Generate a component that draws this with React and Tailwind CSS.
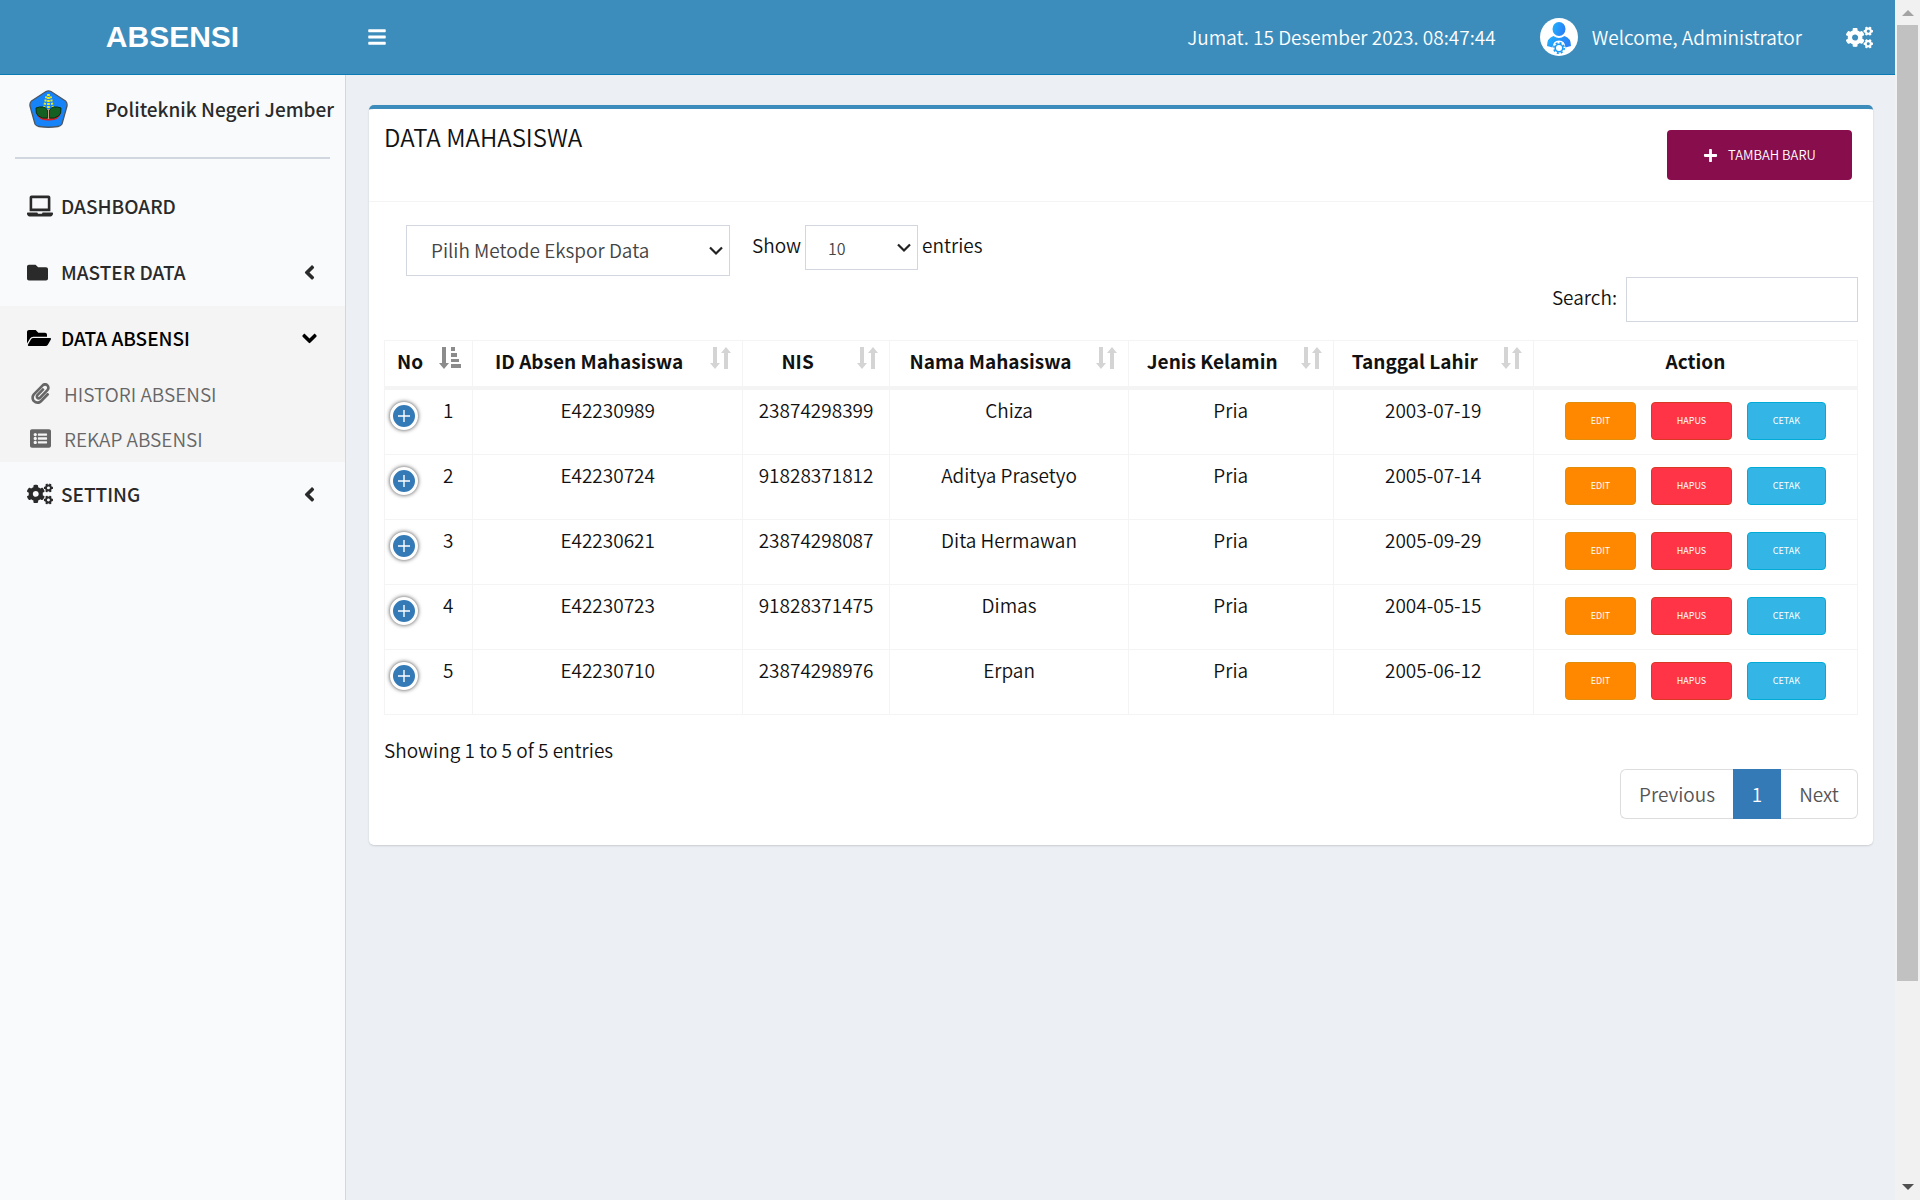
import React from 'react';
import { FaBars, FaCogs, FaFolder, FaFolderOpen, FaPaperclip, FaListAlt, FaPlus, FaLaptop, FaAngleLeft, FaAngleDown } from 'react-icons/fa';

const rows = [
  ['1', 'E42230989', '23874298399', 'Chiza', 'Pria', '2003-07-19'],
  ['2', 'E42230724', '91828371812', 'Aditya Prasetyo', 'Pria', '2005-07-14'],
  ['3', 'E42230621', '23874298087', 'Dita Hermawan', 'Pria', '2005-09-29'],
  ['4', 'E42230723', '91828371475', 'Dimas', 'Pria', '2004-05-15'],
  ['5', 'E42230710', '23874298976', 'Erpan', 'Pria', '2005-06-12'],
];

const columns = ['No', 'ID Absen Mahasiswa', 'NIS', 'Nama Mahasiswa', 'Jenis Kelamin', 'Tanggal Lahir'];

function CampusLogo() {
  return (
    <svg className="h-[38px] w-[39px]" viewBox="0 0 39 38" role="img" aria-label="Logo Politeknik Negeri Jember">
      <path d="M17 1.500 Q19.500 .3 22 1.500 L36.500 11 Q38.500 13 38 16 L33 34 Q32 36 29 36.500 Q19.500 38 10 36.500 Q7 36 6 34 L1 16 Q.5 13 2.500 11Z" fill="#1684f8" stroke="#4d5763" strokeWidth="1.300" />
      <path d="M19.500 4v16" stroke="#f4ee12" strokeWidth="2.600" strokeDasharray="2 1" />
      <path d="M15 18l2.500-12M24 18l-2.500-12" stroke="#e4e820" strokeWidth="2.200" strokeDasharray="2 1.300" />
      <path d="M7 23q4 6 12 4.500q9 1.500 13-4.500q-2 8-12.500 7.500q-10 .5-12.500-7.500z" fill="#d21f2b" />
      <path d="M7 18q8-3 11.500 2v8q-5 1-9-2q-3-2-2.500-8zM32 18q-8-3-11.500 2v8q5 1 9-2q3-2 2.500-8z" fill="#145f22" stroke="#07300e" strokeWidth="1" />
      <path d="M19.500 19v10" stroke="#c9a08a" strokeWidth="1.200" />
    </svg>
  );
}

function Avatar() {
  return (
    <svg className="size-[38px]" viewBox="0 0 38 38" role="img" aria-label="Administrator">
      <defs>
        <linearGradient id="person" x1="0" y1="0" x2="1" y2="0.3">
          <stop offset="0" stopColor="#1fb4fd" />
          <stop offset="1" stopColor="#2a80f7" />
        </linearGradient>
      </defs>
      <circle cx="19" cy="19" r="19" fill="#fff" />
      <ellipse cx="19" cy="11" rx="6.500" ry="7" fill="url(#person)" />
      <path d="M7 28q0-8 6.500-10q5.500 4 11 0q6.500 2 6.500 10l-5.500 1.500q-.5-7-6.500-7t-6.500 7z" fill="url(#person)" />
      <circle cx="19" cy="30" r="3.800" fill="none" stroke="#1b9af7" strokeWidth="1.600" />
      <circle cx="19" cy="30" r="5.200" fill="none" stroke="#1b9af7" strokeWidth="1.600" strokeDasharray="2.040 2.040" />
    </svg>
  );
}

function SortIcon() {
  return (
    <svg className="h-[23px] w-[21px]" viewBox="0 0 21 23" fill="#d4d4d4" aria-hidden="true">
      <path d="M3 0h4v16h3l-5 6-5-6h3z" />
      <path d="M14 22h4V6h3l-5-6-5 6h3z" />
    </svg>
  );
}

function SortAscIcon() {
  return (
    <svg className="h-[23px] w-[22px]" viewBox="0 0 22 23" fill="#8c8c8c" aria-hidden="true">
      <path d="M3 0h4v16h3l-5 6-5-6h3z" />
      <path d="M12 0h4v4h-4zM12 6h6v4h-6zM12 12h8v3h-8zM12 17h10v4h-10z" />
    </svg>
  );
}

function MenuItem({ icon, label, chevron, active }) {
  return (
    <a href="#" className={`flex h-[66px] items-center pr-6 pb-0.5 pl-[27px] leading-7 font-medium ${active ? 'text-black' : 'text-[#2a2a2a]'}`}>
      <span className="w-[34px]">{icon}</span>
      <span className="flex-1">{label}</span>
      {chevron}
    </a>
  );
}

function SelectArrow({ className }) {
  return (
    <svg className={`pointer-events-none absolute h-2.5 w-3.5 ${className}`} viewBox="0 0 14 10" fill="none" stroke="#222" strokeWidth="2.200" aria-hidden="true">
      <path d="M1 1.500l6 6 6-6" />
    </svg>
  );
}

export default function App() {
  return (
    <div className="flex min-h-screen bg-[#ecf0f5] font-['Noto_Sans_CJK_SC','Noto_Sans',sans-serif] text-[19px] leading-[28px] font-[350] text-[#111]">
      <div className="flex min-w-0 flex-1 flex-col">
        <header className="flex h-[75px] items-center border-b border-[#0a7bb5] bg-[#3c8dbc] text-white">
          <a href="#" className="w-[345px] text-center font-['Liberation_Sans',Arial,sans-serif] text-[30px] font-bold">ABSENSI</a>
          <button type="button" className="ml-[22px]" aria-label="Toggle menu"><FaBars size={20} /></button>
          <div className="ml-auto flex items-center pr-[22px]">
            <span>Jumat. 15 Desember 2023. 08:47:44</span>
            <a href="#" className="ml-11 flex items-center gap-[14px]"><Avatar />Welcome, Administrator</a>
            <button type="button" className="ml-11" aria-label="Pengaturan"><FaCogs size={27} /></button>
          </div>
        </header>
        <div className="flex flex-1">
          <aside className="w-[346px] shrink-0 border-r border-[#d2d6de] bg-[#f9fafc]">
            <div className="flex h-[67px] items-center gap-[37px] pl-[29px] font-medium text-[#2a2a2a]">
              <CampusLogo />
              <span>Politeknik Negeri Jember</span>
            </div>
            <hr className="mx-[15px] my-[15px] border-t-2 border-[#d2d6de]" />
            <nav>
              <MenuItem icon={<FaLaptop size={26} />} label="DASHBOARD" />
              <MenuItem icon={<FaFolder size={21} />} label="MASTER DATA" chevron={<FaAngleLeft size={23} />} />
              <div className="bg-[#f4f4f5]">
                <MenuItem active icon={<FaFolderOpen size={24} />} label="DATA ABSENSI" chevron={<FaAngleDown size={23} />} />
                <a href="#" className="flex h-[45px] items-center pb-0.5 pl-[30px] text-[#666]"><span className="w-[34px]"><FaPaperclip size={21} /></span>HISTORI ABSENSI</a>
                <a href="#" className="flex h-[45px] items-center pb-0.5 pl-[30px] text-[#666]"><span className="w-[34px]"><FaListAlt size={21} /></span>REKAP ABSENSI</a>
              </div>
              <MenuItem icon={<FaCogs size={26} />} label="SETTING" chevron={<FaAngleLeft size={23} />} />
            </nav>
          </aside>
          <main className="min-w-0 flex-1 pt-[30px] pr-[22px] pl-[23px]">
            <section className="rounded-[5px] border-t-4 border-[#3c8dbc] bg-white shadow-[0_1px_2px_rgba(0,0,0,0.15)]">
              <div className="flex items-start justify-between border-b border-[#f4f4f4] pt-[15px] pr-[21px] pb-[21px] pl-[15px]">
                <h1 className="text-[24px] leading-[26px]">DATA MAHASISWA</h1>
                <button type="button" className="mt-1.5 flex h-[50px] w-[185px] items-center justify-center gap-2.5 rounded bg-[#870d4c] text-[13px] text-white"><FaPlus size={15} />TAMBAH BARU</button>
              </div>
              <div className="px-[15px] pt-[23px] pb-[26px]">
                <div className="flex items-start pl-[22px]">
                  <div className="relative">
                    <select aria-label="Metode ekspor" className="h-[51px] w-[324px] appearance-none border border-[#d2d6de] bg-white px-6 pb-0.5 text-[#444]"><option>Pilih Metode Ekspor Data</option></select>
                    <SelectArrow className="top-[21px] right-[7px]" />
                  </div>
                  <label className="ml-[22px] flex items-start gap-1">
                    <span className="pt-1.5">Show</span>
                    <span className="relative">
                      <select className="h-[45px] w-[113px] appearance-none border border-[#d2d6de] bg-white px-[22px] text-[16px] text-[#444]"><option>10</option></select>
                      <SelectArrow className="top-[18px] right-[7px]" />
                    </span>
                    <span className="pt-1.5">entries</span>
                  </label>
                </div>
                <label className="mt-px flex items-center justify-end gap-[9px]">
                  <span className="pb-1.5">Search:</span>
                  <input type="search" className="h-[45px] w-[232px] border border-[#d2d6de] bg-white px-4 text-[16px]" />
                </label>
                <table className="mt-[18px] w-full table-fixed border-collapse border border-[#f4f4f4] text-center">
                  <colgroup>
                    <col className="w-[6%]" /><col className="w-[18.3%]" /><col className="w-[10%]" /><col className="w-[16.2%]" /><col className="w-[13.9%]" /><col className="w-[13.6%]" /><col />
                  </colgroup>
                  <thead>
                    <tr className="h-[47px] border-b-4 border-[#f4f4f4]">
                      {columns.map((c, i) => (
                        <th key={c} className="relative border-r border-[#f4f4f4] pr-[37px] pb-1 font-bold whitespace-nowrap">
                          {c}
                          <button type="button" aria-label={`Urutkan ${c}`} className="absolute top-1.5 right-[11px]">{i === 0 ? <SortAscIcon /> : <SortIcon />}</button>
                        </th>
                      ))}
                      <th className="pb-1 font-bold">Action</th>
                    </tr>
                  </thead>
                  <tbody>
                    {rows.map((r) => (
                      <tr key={r[0]} className="h-[65px] border-b border-[#f4f4f4] align-top first:h-[67px]">
                        <td className="border-r border-[#f4f4f4]">
                          <div className="flex items-start pl-[5px]">
                            <button type="button" aria-label={`Detail baris ${r[0]}`} className="mt-3 flex size-7 items-center justify-center rounded-full border-[3px] border-white bg-[#337ab7] text-white shadow-[0_0_4px_#444]">
                              <svg className="size-3" viewBox="0 0 12 12" stroke="currentColor" strokeWidth="1.400" aria-hidden="true"><path d="M6 0v12M0 6h12" /></svg>
                            </button>
                            <span className="pt-1.5 pl-[25px]">{r[0]}</span>
                          </div>
                        </td>
                        {r.slice(1).map((v) => (
                          <td key={v} className="border-r border-[#f4f4f4] pt-1.5">{v}</td>
                        ))}
                        <td>
                          <div className="flex justify-center gap-[15px] pt-3 text-[9px] font-normal text-white">
                            <button type="button" className="h-[38px] w-[71px] rounded border border-[#e08e0b] bg-[#ff8800]">EDIT</button>
                            <button type="button" className="h-[38px] w-[81px] rounded border border-[#d73925] bg-[#ff3547]">HAPUS</button>
                            <button type="button" className="h-[38px] w-[79px] rounded border border-[#00acd6] bg-[#33b5e5]">CETAK</button>
                          </div>
                        </td>
                      </tr>
                    ))}
                  </tbody>
                </table>
                <p className="mt-[21px]">Showing 1 to 5 of 5 entries</p>
                <nav aria-label="Halaman" className="mt-[5px] flex justify-end text-[#555]">
                  <button type="button" className="h-[50px] w-[113px] rounded-l-md border border-r-0 border-[#ddd]">Previous</button>
                  <button type="button" className="h-[50px] w-12 bg-[#337ab7] text-white">1</button>
                  <button type="button" className="h-[50px] w-[77px] rounded-r-md border border-l-0 border-[#ddd]">Next</button>
                </nav>
              </div>
            </section>
          </main>
        </div>
      </div>
      <div className="flex w-[25px] shrink-0 flex-col items-center bg-[#f1f1f1]" aria-hidden="true">
        <svg className="h-[25px] w-3" viewBox="0 0 12 25" fill="#a3a3a3"><path d="M0 16h12l-6-6z" /></svg>
        <div className="h-[956px] w-[21px] bg-[#c1c1c1]" />
        <svg className="mt-auto h-[25px] w-3" viewBox="0 0 12 25" fill="#505050"><path d="M0 9h12l-6 6z" /></svg>
      </div>
    </div>
  );
}
